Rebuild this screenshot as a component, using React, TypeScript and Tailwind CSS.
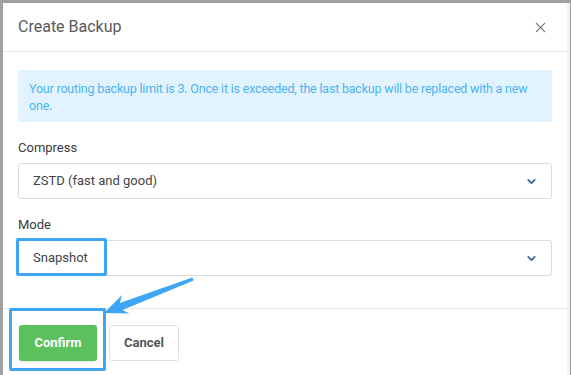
import { X, ChevronDown } from 'lucide-react';

function SelectField({ label, value }: { label: string; value: string }) {
  return (
    <div className="mb-[7px]">
      <div className="text-[13px] leading-[18px] text-[#3a3a3a] mb-[6px]">{label}</div>
      <div className="h-[36px] border border-[#dcdcdc] rounded-[3px] flex items-center justify-between pl-[14px] pr-[13px]">
        <span className="text-[13px] text-[#444]">{value}</span>
        <ChevronDown className="w-[13px] h-[13px] text-[#3c6a98]" strokeWidth={3.2} />
      </div>
    </div>
  );
}

export default function App() {
  return (
    <div
      className="relative w-[571px] h-[375px] overflow-hidden bg-[#a0a0a0] pt-[3px] pl-[3px] pr-[1px]"
      style={{ fontFamily: 'Roboto, "Liberation Sans", sans-serif' }}
    >
      <div className="bg-white h-[400px] border-r-[3px] border-[#f3f3f3]">
        {/* Header */}
        <header className="h-[49px] px-[15px] flex items-center justify-between border-b border-[#e6e6e6]">
          <h2 className="text-[16px] text-[#5a5a5a]">Create Backup</h2>
          <X className="w-[17px] h-[17px] text-[#7a7a7a] mr-[3px]" strokeWidth={1.5} />
        </header>

        {/* Body */}
        <div className="px-[15px] pt-[18px] pb-[25px] border-b border-[#e6e6e6]">
          <div className="bg-[#e1f3fe] rounded-[3px] pl-[11px] pr-[6px] pt-[10px] pb-[8px] mb-[17px] text-[12.5px] leading-[17px] tracking-[-0.2px] text-[#4db4ee]">
            Your routing backup limit is 3. Once it is exceeded, the last backup will be replaced with a new one.
          </div>
          <SelectField label="Compress" value="ZSTD (fast and good)" />
          <div className="h-[10px]" />
          <SelectField label="Mode" value="Snapshot" />
        </div>

        {/* Footer */}
        <div className="px-[16px] pt-[16px] flex gap-[12px]">
          <button className="h-[36px] w-[78px] rounded-[3px] bg-[#5cc05c] text-white text-[13px] font-bold shadow-sm">
            Confirm
          </button>
          <button className="h-[36px] w-[70px] rounded-[3px] border border-[#dedede] bg-white text-[#555] text-[13px] font-bold">
            Cancel
          </button>
        </div>
      </div>

      {/* Annotations */}
      <div className="absolute left-[16px] top-[238px] w-[91px] h-[38px] border-[3px] border-[#3ea6f4] rounded-[2px]" />
      <div className="absolute left-[9px] top-[308px] w-[97px] h-[63px] border-[3px] border-[#3ea6f4] rounded-[2px]" />
      <svg className="absolute left-0 top-0" width="571" height="375">
        <polygon
          points="193.6,280.6 122.5,310 129.5,313.5 104,313 122,295 119.8,303 192.4,277.4"
          fill="#3ea6f4"
        />
      </svg>
    </div>
  );
}
